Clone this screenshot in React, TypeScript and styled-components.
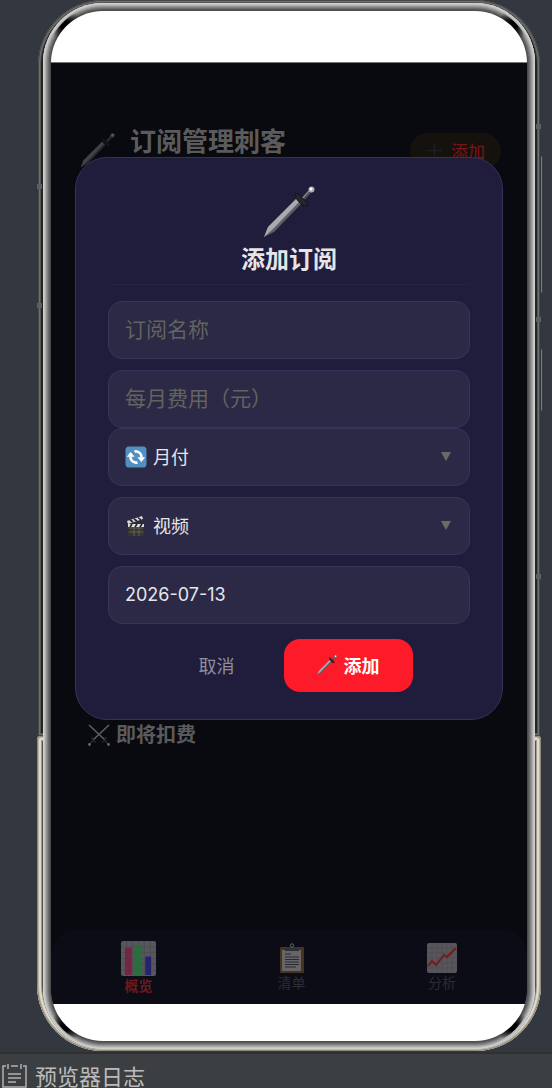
import React from "react";
import styled, { createGlobalStyle, css } from "styled-components";

const font = `"Noto Sans", "Noto Sans CJK SC", sans-serif`;

const GlobalStyle = createGlobalStyle`
  * { box-sizing: border-box; }
  body { margin: 0; background: #333840; font-family: ${font}; }
  button, input, select { font: inherit; }
`;

const Previewer = styled.div`
  min-height: 100vh;
  display: flex;
  flex-direction: column;
`;

const Stage = styled.div`
  flex: 1;
  display: flex;
  padding: 0 11px 1px 37px;
`;

/* Phone casing: dark metal on the upper part, pale metal on the lower part */
const Shell = styled.div`
  position: relative;
  flex: 1;
  display: flex;
  padding: 3px 6px 2px;

  &::before,
  &::after {
    content: "";
    position: absolute;
  }
  &::before {
    inset: 0 1px 30% 1px;
    border-radius: 65px 65px 0 0;
    background: #242424;
    box-shadow: inset 0 0 0 1px #474846, inset 0 0 0 2px #6f716f,
      inset 0 0 0 3px #555;
  }
  &::after {
    inset: 70% 0 0 0;
    border-radius: 4px 4px 66px 66px;
    background: #55524c;
    box-shadow: inset 0 0 0 1px #8f8878, inset 0 0 0 2px #beb7a7,
      inset 0 0 0 4px #e0dacd, inset 0 0 0 5px #a09b90;
  }
`;

const Key = styled.span<{ $side: "left" | "right"; $top: number; $length: number }>`
  position: absolute;
  z-index: 1;
  top: ${(p) => p.$top}px;
  ${(p) => (p.$side === "left" ? "left: 0;" : "right: 0;")}
  width: 5px;
  height: ${(p) => p.$length}px;
  background: #5d6060;
`;

const VolumeKey = styled(Key)`
  right: -2px;
  width: 2px;
  border-radius: 0 2px 2px 0;
  background: #777b7e;
  border-right: 1px solid #3a3d40;
`;

const Rim = styled.div`
  position: relative;
  z-index: 1;
  flex: 1;
  display: flex;
  padding: 8px;
  border-radius: 60px;
  background: #4c4c4c;
  box-shadow: inset 0 0 0 1px #d0d0d0, inset 0 0 0 2px #c2c2c2,
    inset 0 0 0 3px #acacac, inset 0 0 0 4px #969696,
    inset 0 0 0 5px #808080, inset 0 0 0 6px #6c6c6c,
    inset 0 0 0 7px #5a5a5a;

  &::before {
    content: "";
    position: absolute;
    inset: 3px;
    border-radius: 57px;
    background:
      radial-gradient(circle at 19px 19px, #000 4px, transparent 16px),
      radial-gradient(circle at calc(100% - 19px) 19px, #000 4px, transparent 16px),
      radial-gradient(circle at 19px calc(100% - 19px), #000 4px, transparent 16px),
      radial-gradient(circle at calc(100% - 19px) calc(100% - 19px), #000 4px, transparent 16px);
  }
`;

const Screen = styled.div`
  position: relative;
  flex: 1;
  display: flex;
  flex-direction: column;
  border-radius: 52px;
  background: #fff;
  overflow: hidden;
`;

const AppView = styled.div`
  flex: 1;
  display: flex;
  flex-direction: column;
  margin: 51px 0 37px;
  border-top: 1px solid #777;
  background: #090910;
`;

const Header = styled.header`
  display: flex;
  align-items: flex-start;
  padding: 58px 26px 0 29px;

  > svg {
    margin-top: 12px;
  }
`;

const Title = styled.h1`
  flex: 1;
  margin: 0 0 0 15px;
  font-size: 26px;
  line-height: 40px;
  color: #5b5b5b;
`;

const HeaderAdd = styled.button`
  display: flex;
  align-items: center;
  gap: 8px;
  height: 36px;
  margin-top: 12px;
  padding: 0 16px 2px;
  border: 0;
  border-radius: 18px;
  background: #15120d;
  color: #7a1518;
  font-size: 17px;
`;

const Upcoming = styled.h2`
  display: flex;
  align-items: center;
  gap: 6px;
  margin: 552px 0 0;
  padding-left: 37px;
  font-size: 20px;
  line-height: 28px;
  color: #5b5b5b;
`;

const TabBar = styled.nav`
  display: flex;
  justify-content: space-between;
  height: 74px;
  margin-top: auto;
  padding: 2px 70px 0;
  border-radius: 24px 24px 0 0;
  background: #0c0c17;
`;

const Tab = styled.button<{ $active?: boolean }>`
  display: flex;
  flex-direction: column;
  align-items: center;
  justify-content: center;
  padding: 0;
  border: 0;
  background: none;
  font-size: 14px;
  line-height: 20px;
  color: #2d2d31;
  ${(p) => p.$active && css`font-weight: 700; color: #6e191d;`}
`;

const Dialog = styled.form`
  position: absolute;
  top: 146px;
  left: 24px;
  right: 24px;
  display: flex;
  flex-direction: column;
  padding: 28px 32px 27px;
  border: 1px solid #35335a;
  border-radius: 32px;
  background: #1f1d3b;
`;

const DialogHead = styled.div`
  display: flex;
  flex-direction: column;
  align-items: center;
  margin-bottom: 16px;
  padding-bottom: 6px;
  border-bottom: 1px solid #252341;
`;

const DialogTitle = styled.h2`
  margin: 2px 0 0;
  font-size: 24px;
  line-height: 38px;
  color: #e5e5e8;
`;

const Fields = styled.div`
  display: flex;
  flex-direction: column;
  gap: 11px;
`;

const FieldPair = styled.div`
  display: flex;
  flex-direction: column;
`;

const box = css`
  width: 100%;
  height: 58px;
  border: 1px solid #37345a;
  border-radius: 14px;
  background: #2b2945;
  color: #e6e6ea;
  outline: 0;
`;

const TextBox = styled.input`
  ${box}
  padding: 0 16px 2px;
  font-size: 21px;
  &::placeholder { color: #63635f; opacity: 1; }
`;

const DateBox = styled(TextBox)`
  font-family: Inter, sans-serif;
  font-size: 18px;
`;

const SelectWrap = styled.label`
  position: relative;
  display: block;
  height: 58px;
`;

const Select = styled.select`
  ${box}
  appearance: none;
  padding: 0 40px 1px 44px;
  font-size: 18px;
`;

const SelectIcon = styled.span`
  position: absolute;
  top: 18px;
  left: 17px;
  display: flex;
  pointer-events: none;
`;

const Arrow = styled.span`
  position: absolute;
  top: 24px;
  right: 19px;
  border: 5px solid transparent;
  border-top: 9px solid #6b6b66;
  border-bottom: 0;
  pointer-events: none;
`;

const Actions = styled.div`
  display: flex;
  justify-content: center;
  gap: 16px;
  margin-top: 15px;
`;

const Action = styled.button<{ $primary?: boolean }>`
  display: flex;
  align-items: center;
  justify-content: center;
  gap: 7px;
  height: 53px;
  padding: 0 33px 2px;
  border: 0;
  border-radius: 16px;
  background: ${(p) => (p.$primary ? "#fd1b29" : "none")};
  color: ${(p) => (p.$primary ? "#fff" : "#8f8e9d")};
  font-size: 18px;
  font-weight: ${(p) => (p.$primary ? 700 : 400)};
`;

const LogBar = styled.footer`
  display: flex;
  align-items: center;
  gap: 8px;
  height: 36px;
  padding: 10px 0 0 2px;
  border-top: 2px solid #303030;
  background: #3c3f41;
  color: #bbb;
  font-size: 22px;
  line-height: 22px;
`;

const Sword = ({ size, dim }: { size: number; dim?: boolean }) => (
  <svg width={size} height={size} viewBox="0 0 52 52" opacity={dim ? 0.35 : 1} aria-hidden="true">
    <path d="M1 51L5 41L34 12L39 17L11 46Z" fill="#5d5e66" />
    <path d="M1 51L5 41L34 12L37 15L10 43Z" fill="#a9a9b0" />
    <path d="M39 14L48 4" stroke="#4c4d54" strokeWidth="4" />
    <path d="M39 13L47 4" stroke="#a5a5ac" strokeWidth="1" />
    <path d="M32 7Q36 7 39 12Q44 14 45 20Q41 21 37 17Q32 13 32 7Z" fill="#26272c" stroke="#141519" />
    <circle cx="48.500" cy="3.500" r="3" fill="#a9a9af" />
    <circle cx="48" cy="3" r="1.500" fill="#fff" />
  </svg>
);

const Crossed = () => (
  <svg width="22" height="22" viewBox="0 0 22 22" fill="none" aria-hidden="true">
    <path d="M1 1L17 16M21 1L5 16" stroke="#5d5e60" strokeWidth="1.600" />
    <path d="M14 18Q18 17 18 13M8 18Q4 17 4 13" stroke="#242527" strokeWidth="1.500" />
    <path d="M17 16L20 20M5 16L2 20" stroke="#242527" strokeWidth="1.500" />
    <circle cx="20.500" cy="20.500" r="1.400" fill="#666" />
    <circle cx="1.500" cy="20.500" r="1.400" fill="#666" />
  </svg>
);

const Repeat = () => (
  <svg width="22" height="22" viewBox="0 0 22 22" aria-hidden="true">
    <rect x="0.500" y="0.500" width="21" height="21" rx="3.500" fill="#5390c2" />
    <path d="M5.500 10.500A5.500 5.500 0 0 0 10.500 16.500M16.500 11.500A5.500 5.500 0 0 0 11.500 5.500" stroke="#fff" strokeWidth="2.600" fill="none" />
    <path d="M9.500 5.600Q11 5.200 12 5.600M12.500 16.400Q11 16.800 10 16.400" stroke="#fff" strokeWidth="2.600" fill="none" />
    <path d="M1.800 10.800L5.600 6L9.600 10.800Z M12.400 11.200H20.200L16.400 16Z" fill="#fff" />
  </svg>
);

const Clapper = () => (
  <svg width="22" height="22" viewBox="0 0 22 22" aria-hidden="true">
    <path d="M3 9H19V21H3Z" fill="#35352f" />
    <path d="M4 13H18M4 17H18M9 11V21M14 11V21" stroke="#74746a" strokeWidth="0.700" />
    <path d="M2 6L17 1L18 4L3 9Z" fill="#ddd" />
    <path d="M5 5L8 7M9 4L12 6M13 2.500L16 5" stroke="#222" strokeWidth="1.600" />
    <path d="M3 9H19V12H3Z" fill="#ddd" />
    <path d="M5 12L7 9M10 12L12 9M15 12L17 9" stroke="#222" strokeWidth="1.600" />
  </svg>
);

const Bars = () => (
  <svg width="35" height="35" viewBox="0 0 36 36" aria-hidden="true">
    <rect width="36" height="36" rx="2" fill="#56565c" />
    <path d="M0 6H36M0 12H36M0 18H36M0 24H36M0 30H36M6 0V36M12 0V36M18 0V36M24 0V36M30 0V36" stroke="#4a4a50" strokeWidth="0.700" />
    <path d="M4 7H11V35H4Z" fill="#70273f" />
    <path d="M14 4H21V35H14Z" fill="#28703b" />
    <path d="M25 16H31V35H25Z" fill="#23236f" />
  </svg>
);

const Clipboard = () => (
  <svg width="30" height="30" viewBox="0 0 30 30" aria-hidden="true">
    <rect x="3" y="4" width="24" height="26" rx="1" fill="#4b321c" />
    <path d="M5 7H24V28H5Z" fill="#66666a" />
    <path d="M8 5H22V8H8Z" fill="#303036" />
    <circle cx="15" cy="2.500" r="1.700" fill="none" stroke="#66666a" />
    <path d="M8 11H14M8 14H22M8 16.500H22M8 19H22M8 21.500H22M8 24H19" stroke="#29292e" />
  </svg>
);

const Trend = () => (
  <svg width="30" height="30" viewBox="0 0 30 30" aria-hidden="true">
    <rect width="30" height="30" rx="2" fill="#56565c" />
    <path d="M0 5H30M0 10H30M0 15H30M0 20H30M0 25H30M5 0V30M10 0V30M15 0V30M20 0V30M25 0V30" stroke="#4a4a50" strokeWidth="0.700" />
    <path d="M1 23L5 18L9 22L17 12L20 14L29 5" fill="none" stroke="#741d18" strokeWidth="2" />
  </svg>
);

const PlusMark = () => (
  <svg width="17" height="17" viewBox="0 0 17 17" aria-hidden="true">
    <path d="M8.500 1V16M1 8.500H16" stroke="#1d1e23" strokeWidth="1.500" />
  </svg>
);

const LogIcon = () => (
  <svg width="25" height="24" viewBox="0 0 25 24" fill="none" stroke="#afb1b3" strokeWidth="1.500" aria-hidden="true">
    <path d="M4 2H1V23H24V2H21M9 2H16M6 0V5M19 0V5M6 10H19M6 14H19M6 18H14" />
  </svg>
);

export default function App() {
  return (
    <Previewer>
      <GlobalStyle />
      <Stage>
        <Shell>
          <Key $side="left" $top={184} $length={5} />
          <Key $side="left" $top={303} $length={5} />
          <Key $side="right" $top={124} $length={5} />
          <Key $side="right" $top={317} $length={5} />
          <Key $side="right" $top={574} $length={5} />
          <VolumeKey $side="right" $top={156} $length={137} />
          <VolumeKey $side="right" $top={349} $length={62} />
          <Rim>
            <Screen>
              <AppView>
                <Header>
                  <Sword size={35} dim />
                  <Title>订阅管理刺客</Title>
                  <HeaderAdd type="button"><PlusMark />添加</HeaderAdd>
                </Header>
                <Upcoming><Crossed />即将扣费</Upcoming>
                <TabBar>
                  <Tab type="button" $active><Bars />概览</Tab>
                  <Tab type="button"><Clipboard />清单</Tab>
                  <Tab type="button"><Trend />分析</Tab>
                </TabBar>
              </AppView>
              <Dialog onSubmit={(e) => e.preventDefault()}>
                <DialogHead>
                  <Sword size={52} />
                  <DialogTitle>添加订阅</DialogTitle>
                </DialogHead>
                <Fields>
                  <TextBox aria-label="订阅名称" placeholder="订阅名称" />
                  <FieldPair>
                    <TextBox aria-label="每月费用（元）" placeholder="每月费用（元）" />
                    <SelectWrap>
                      <Select aria-label="付费周期"><option>月付</option></Select>
                      <SelectIcon><Repeat /></SelectIcon>
                      <Arrow />
                    </SelectWrap>
                  </FieldPair>
                  <SelectWrap>
                    <Select aria-label="分类"><option>视频</option></Select>
                    <SelectIcon><Clapper /></SelectIcon>
                    <Arrow />
                  </SelectWrap>
                  <DateBox aria-label="日期" defaultValue="2026-07-13" />
                </Fields>
                <Actions>
                  <Action type="button">取消</Action>
                  <Action type="submit" $primary><Sword size={20} />添加</Action>
                </Actions>
              </Dialog>
            </Screen>
          </Rim>
        </Shell>
      </Stage>
      <LogBar><LogIcon />预览器日志</LogBar>
    </Previewer>
  );
}
